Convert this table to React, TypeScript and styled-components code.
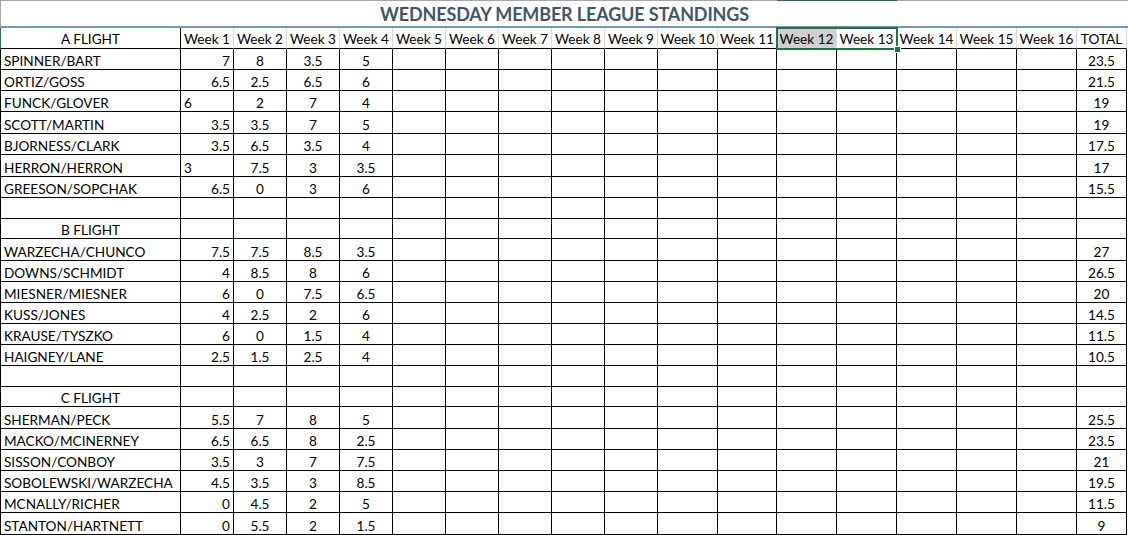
import styled, { createGlobalStyle } from 'styled-components'

const colors = {
    frame: '#a6a6a6',
    gridline: '#d9d9d9',
    line: '#000000',
    excel: '#217346',
    title: '#44546a',
    rule: '#7096c6',
    picked: '#d0d0d0',
}

// A, Week 1..16, TOTAL
const COLUMNS = '180px repeat(9, 53px) 60px 59px repeat(5, 60px) 50px'

const GlobalStyle = createGlobalStyle`
    html, body {
        margin: 0;
        padding: 0;
        background: #ffffff;
    }
`

const Sheet = styled.div`
    width: 1128px;
    height: 535px;
    overflow: hidden;
    background: #ffffff;
    font-family: Lato, "Open Sans", "DejaVu Sans", sans-serif;
    font-size: 13.6px;
    color: #000000;
`

const Ruler = styled.div`
    display: grid;
    grid-template-columns: ${COLUMNS};
    height: 1px;
    padding-left: 1px;
    background: ${colors.frame};
`

const RulerMark = styled.div`
    grid-column: 13 / 15;
    background: ${colors.excel};
`

const TitleRow = styled.div`
    box-sizing: border-box;
    height: 27px;
    padding-top: 1px;
    border-left: 1px solid ${colors.frame};
    border-bottom: 2px solid ${colors.rule};
    display: flex;
    align-items: center;
    justify-content: center;
    font-size: 18px;
    font-weight: 700;
    letter-spacing: -0.15px;
    color: ${colors.title};
`

const Row = styled.div<{ $h: number; $edge: string }>`
    display: grid;
    grid-template-columns: ${COLUMNS};
    height: ${p => p.$h}px;
    border-left: 1px solid ${p => p.$edge};
`

const Cell = styled.div<{ $align?: 'left' | 'right' | 'center' }>`
    box-sizing: border-box;
    display: flex;
    align-items: flex-end;
    justify-content: ${p => p.$align === 'right' ? 'flex-end' : p.$align === 'center' ? 'center' : 'flex-start'};
    padding: 0 3px 0 3px;
    border-right: 1px solid ${colors.line};
    border-bottom: 1px solid ${colors.line};
    line-height: 1;
    white-space: nowrap;
    overflow: hidden;
`

const HeadCell = styled(Cell)<{ $strong?: boolean; $picked?: boolean }>`
    padding: 0 1px 1px 1px;
    border-right-color: ${p => p.$strong ? colors.line : colors.gridline};
    background: ${p => p.$picked ? colors.picked : 'transparent'};
`

const Selection = styled.div`
    grid-column: span 2;
    display: grid;
    grid-template-columns: 60px 60px;
    position: relative;
    outline: 2px solid ${colors.excel};
    outline-offset: -1px;

    &::after {
        content: '';
        position: absolute;
        right: -4px;
        bottom: -4px;
        width: 5px;
        height: 5px;
        background: ${colors.excel};
        border: 1px solid #ffffff;
    }
`

type Line =
    | { kind: 'team'; name: string; w: string[]; total: string; textW1?: boolean; h?: number }
    | { kind: 'flight'; label: string; h?: number }
    | { kind: 'blank'; h?: number }

const lines: Line[] = [
    { kind: 'team', name: 'SPINNER/BART', w: ['7', '8', '3.5', '5'], total: '23.5' },
    { kind: 'team', name: 'ORTIZ/GOSS', w: ['6.5', '2.5', '6.5', '6'], total: '21.5' },
    { kind: 'team', name: 'FUNCK/GLOVER', w: ['6', '2', '7', '4'], total: '19', textW1: true },
    { kind: 'team', name: 'SCOTT/MARTIN', w: ['3.5', '3.5', '7', '5'], total: '19', h: 22 },
    { kind: 'team', name: 'BJORNESS/CLARK', w: ['3.5', '6.5', '3.5', '4'], total: '17.5' },
    { kind: 'team', name: 'HERRON/HERRON', w: ['3', '7.5', '3', '3.5'], total: '17', textW1: true, h: 22 },
    { kind: 'team', name: 'GREESON/SOPCHAK', w: ['6.5', '0', '3', '6'], total: '15.5' },
    { kind: 'blank' },
    { kind: 'flight', label: 'B FLIGHT', h: 20 },
    { kind: 'team', name: 'WARZECHA/CHUNCO', w: ['7.5', '7.5', '8.5', '3.5'], total: '27', h: 22 },
    { kind: 'team', name: 'DOWNS/SCHMIDT', w: ['4', '8.5', '8', '6'], total: '26.5' },
    { kind: 'team', name: 'MIESNER/MIESNER', w: ['6', '0', '7.5', '6.5'], total: '20' },
    { kind: 'team', name: 'KUSS/JONES', w: ['4', '2.5', '2', '6'], total: '14.5' },
    { kind: 'team', name: 'KRAUSE/TYSZKO', w: ['6', '0', '1.5', '4'], total: '11.5' },
    { kind: 'team', name: 'HAIGNEY/LANE', w: ['2.5', '1.5', '2.5', '4'], total: '10.5' },
    { kind: 'blank' },
    { kind: 'flight', label: 'C FLIGHT', h: 20 },
    { kind: 'team', name: 'SHERMAN/PECK', w: ['5.5', '7', '8', '5'], total: '25.5', h: 22 },
    { kind: 'team', name: 'MACKO/MCINERNEY', w: ['6.5', '6.5', '8', '2.5'], total: '23.5' },
    { kind: 'team', name: 'SISSON/CONBOY', w: ['3.5', '3', '7', '7.5'], total: '21' },
    { kind: 'team', name: 'SOBOLEWSKI/WARZECHA', w: ['4.5', '3.5', '3', '8.5'], total: '19.5' },
    { kind: 'team', name: 'MCNALLY/RICHER', w: ['0', '4.5', '2', '5'], total: '11.5' },
    { kind: 'team', name: 'STANTON/HARTNETT', w: ['0', '5.5', '2', '1.5'], total: '9', h: 22 },
]

const empties = (n: number) =>
    Array.from({ length: n }, (_, i) => <Cell key={`e${i}`} />)

const weekLabel = (i: number) => `Week ${i + 1}`

const HeaderRow = () =>
    <Row $h={21} $edge={colors.excel}>
        <HeadCell $align='center' $strong>A FLIGHT</HeadCell>
        {Array.from({ length: 11 }, (_, i) =>
            <HeadCell key={i} $align='center'>{weekLabel(i)}</HeadCell>
        )}
        <Selection>
            <HeadCell $align='center' $picked>{weekLabel(11)}</HeadCell>
            <HeadCell $align='center'>{weekLabel(12)}</HeadCell>
        </Selection>
        {[13, 14, 15].map(i =>
            <HeadCell key={i} $align='center'>{weekLabel(i)}</HeadCell>
        )}
        <HeadCell $align='center'>TOTAL</HeadCell>
    </Row>

const SheetLine = ({ line }: { line: Line }) => {
    const h = line.h ?? 21
    if (line.kind === 'blank')
        return <Row $h={h} $edge={colors.line}>{empties(18)}</Row>
    if (line.kind === 'flight')
        return (
            <Row $h={h} $edge={colors.line}>
                <Cell $align='center'>{line.label}</Cell>
                {empties(17)}
            </Row>
        )
    return (
        <Row $h={h} $edge={colors.line}>
            <Cell $align='left'>{line.name}</Cell>
            <Cell $align={line.textW1 ? 'left' : 'right'}>{line.w[0]}</Cell>
            {line.w.slice(1).map((v, i) => <Cell key={i} $align='center'>{v}</Cell>)}
            {empties(12)}
            <Cell $align='center'>{line.total}</Cell>
        </Row>
    )
}

const App = () =>
    <>
        <GlobalStyle />
        <Sheet>
            <Ruler><RulerMark /></Ruler>
            <TitleRow>WEDNESDAY MEMBER LEAGUE STANDINGS</TitleRow>
            <HeaderRow />
            {lines.map((line, i) => <SheetLine key={i} line={line} />)}
        </Sheet>
    </>

export default App
